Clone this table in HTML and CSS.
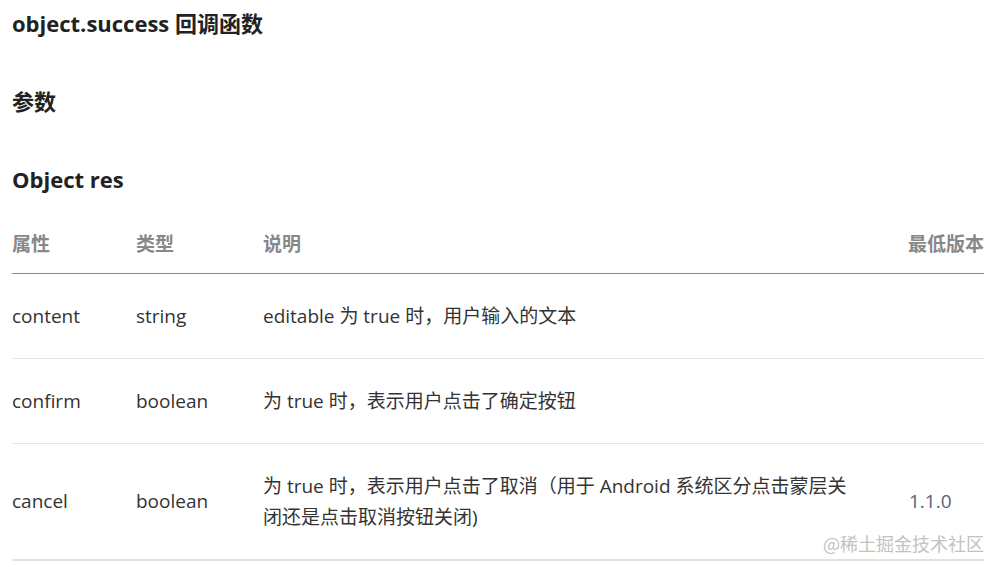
FILE: index.html
```html
<!DOCTYPE html>
<html lang="zh-CN">
<head>
<meta charset="utf-8">
<title>object.success 回调函数</title>
<link rel="stylesheet" href="styles.css">
</head>
<body>
<div class="doc">
  <h3 class="title">object.success 回调函数</h3>
  <h3 class="title">参数</h3>
  <h3 class="title">Object res</h3>
  <table class="params">
    <thead>
      <tr>
        <th class="c-name">属性</th>
        <th class="c-type">类型</th>
        <th class="c-desc">说明</th>
        <th class="c-ver">最低版本</th>
      </tr>
    </thead>
    <tbody>
      <tr>
        <td>content</td>
        <td>string</td>
        <td>editable 为 true 时，用户输入的文本</td>
        <td></td>
      </tr>
      <tr>
        <td>confirm</td>
        <td>boolean</td>
        <td>为 true 时，表示用户点击了确定按钮</td>
        <td></td>
      </tr>
      <tr>
        <td>cancel</td>
        <td>boolean</td>
        <td>为 true 时，表示用户点击了取消（用于 Android 系统区分点击蒙层关闭还是点击取消按钮关闭)</td>
        <td class="ver">1.1.0</td>
      </tr>
    </tbody>
  </table>
  <div class="watermark">@稀土掘金技术社区</div>
</div>
</body>
</html>
```

FILE: styles.css
```css
html, body {
  margin: 0;
  padding: 0;
  background: #fff;
}

body {
  font-family: "Open Sans", "Noto Sans CJK SC", sans-serif;
  color: #333;
}

.doc {
  position: relative;
  padding: 8px 17px 0 12px;
  height: 562px;
  box-sizing: border-box;
}

.title {
  margin: 0 0 48px 0;
  font-size: 22px;
  line-height: 30px;
  font-weight: 700;
  color: #222;
}

.title:last-of-type {
  margin-bottom: 21px;
}

.params {
  width: 100%;
  border-collapse: collapse;
  font-size: 19px;
  line-height: 31px;
}

.params th {
  text-align: left;
  font-weight: 700;
  color: #888;
  padding: 14px 0 13px 0;
  border-bottom: 1px solid #8a8a8a;
  white-space: nowrap;
}

.params td {
  padding: 26.5px 0;
  border-bottom: 1px solid #e6e6e6;
  vertical-align: middle;
}

.params tbody tr:last-child td {
  border-bottom: 2px solid #e2e2e2;
}

.c-name { width: 124px; }
.c-type { width: 127px; }
.c-desc { width: 595px; padding-right: 50px !important; }
.c-ver { width: 76px; }

.params td:nth-child(3) {
  padding-right: 50px;
}

.ver {
  color: #56617c;
  padding-left: 1px !important;
}

.watermark {
  position: absolute;
  right: 17px;
  top: 530px;
  font-size: 18px;
  line-height: 26px;
  color: #c2c2c2;
  font-family: "Noto Sans CJK SC", sans-serif;
}
```
